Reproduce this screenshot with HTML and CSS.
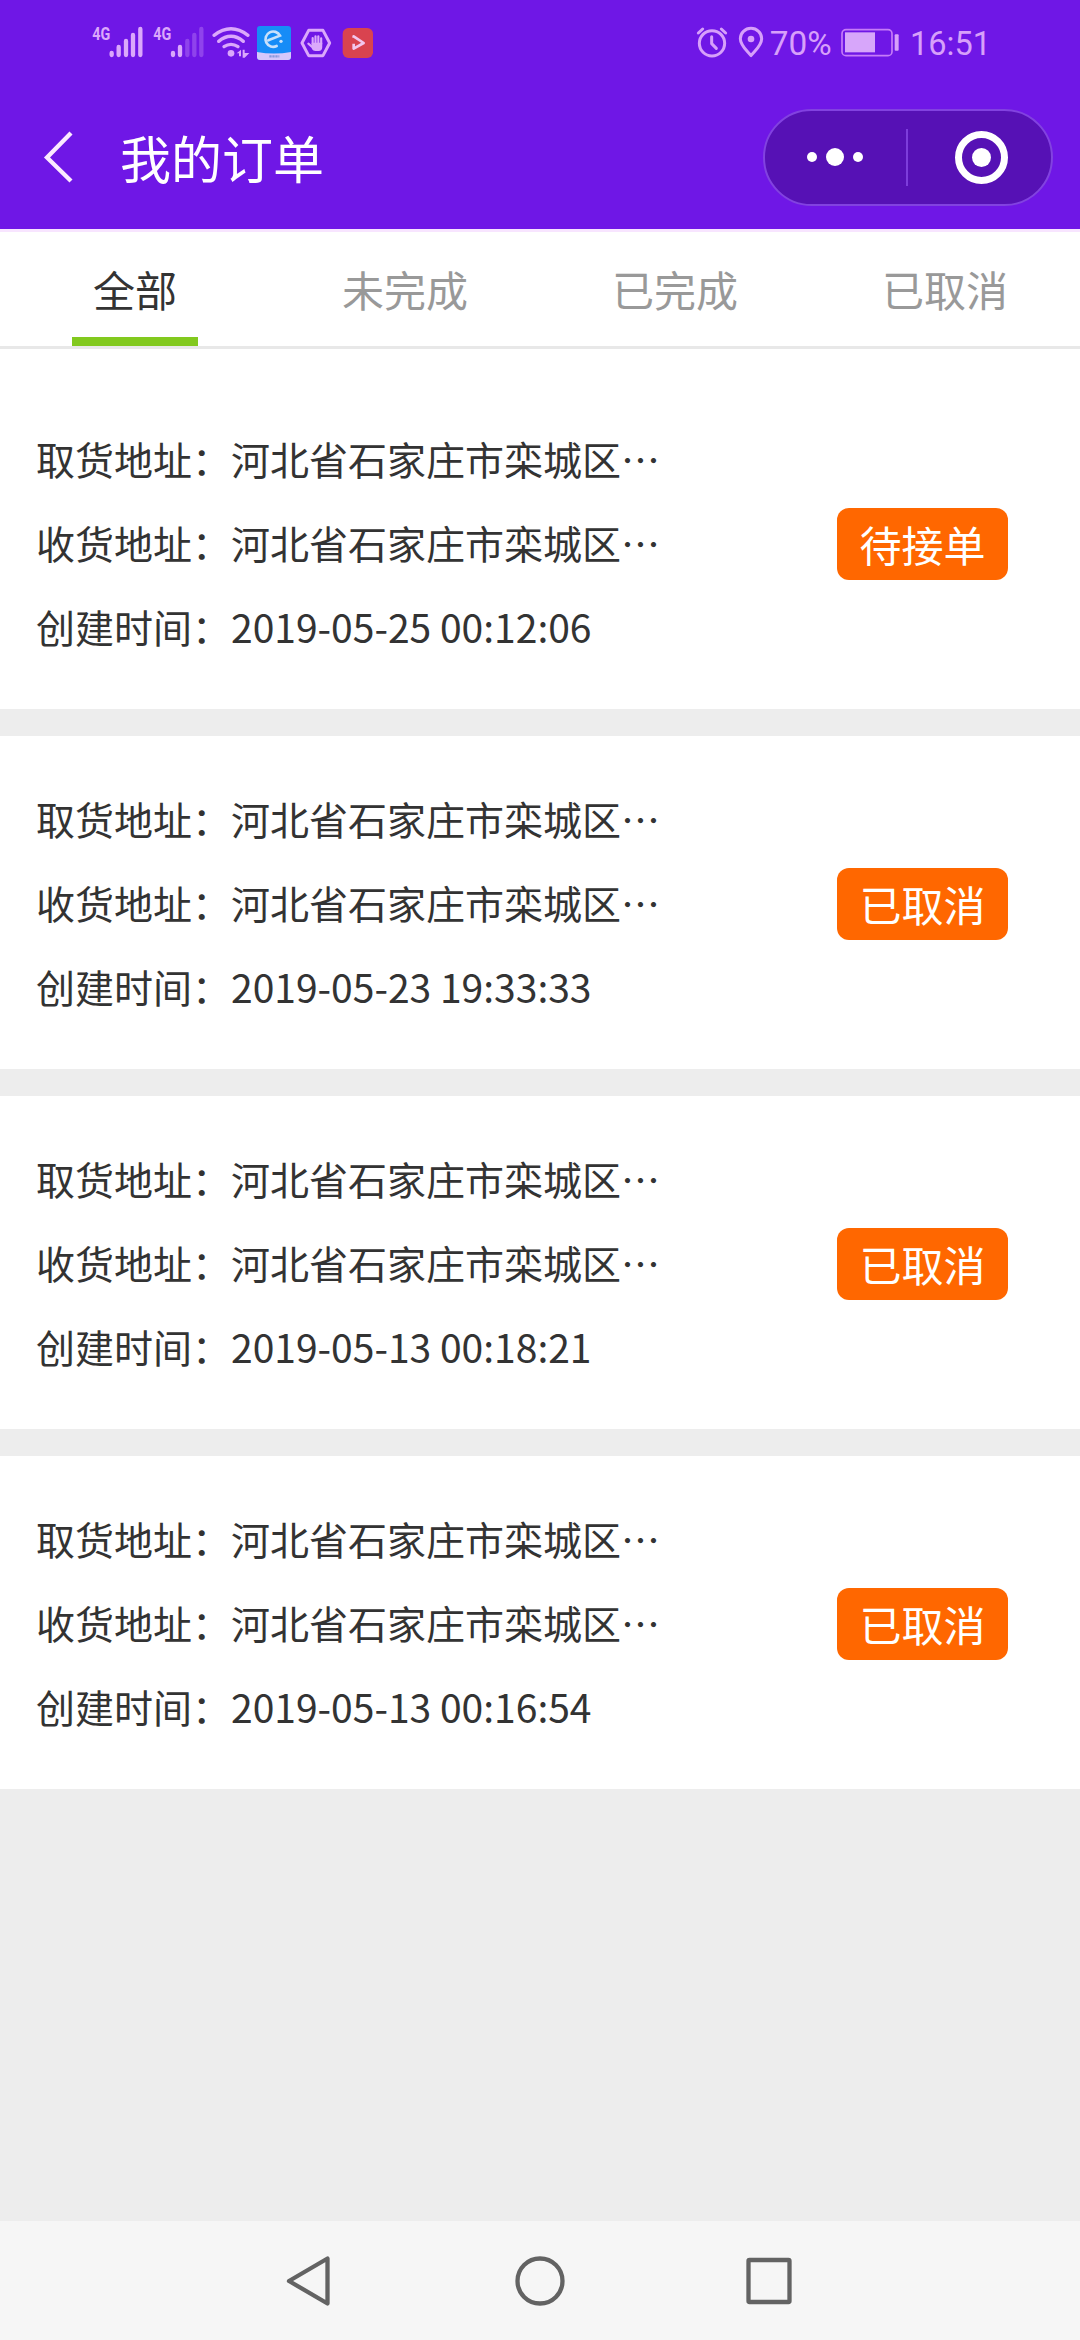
FILE: index.html
```html
<!DOCTYPE html>
<html lang="zh-CN">
<head>
<meta charset="utf-8">
<title>我的订单</title>
<link rel="stylesheet" href="styles.css">
</head>
<body>
<header class="header">
  <div class="status">
    <svg class="status-left" width="310" height="70" viewBox="0 0 930 210" fill="#dba8fb">
      <text class="net" x="37" y="90" textLength="54" lengthAdjust="spacingAndGlyphs">4G</text>
      <g stroke="#dba8fb" stroke-width="13" stroke-linecap="round">
        <path d="M95 129v6M116 111v24M138 93v42M159 75v60M181 57v78"/>
        <path d="M279 129v6M300 111v24"/>
        <path d="M322 93v42M343 75v60M364 57v78" opacity=".3"/>
      </g>
      <text class="net" x="220" y="90" textLength="54" lengthAdjust="spacingAndGlyphs">4G</text>
      <g fill="none" stroke="#dba8fb" stroke-width="10" stroke-linecap="round">
        <path d="M402 76Q453 37 504 76M416 94Q453 64 490 94M432 110Q453 96 474 110"/>
      </g>
      <circle cx="453" cy="130" r="10"/>
      <path d="M470 130l13-11v20h-6v-9zM488 119h6v10h14l-14 14h-6z"/>
      <rect x="531" y="48" width="102" height="102" rx="9" fill="#168cf7"/>
      <path d="M531 126q51 9 102 0v15q0 9-9 9h-84q-9 0-9-9z" fill="#d5c7fb"/>
      <path d="M568 139h30" stroke="#8798dc" stroke-width="7" stroke-dasharray="7 2"/>
      <path d="M565 91L600 77A23 23 0 1 0 590 108" fill="none" stroke="#c8e0fb" stroke-width="8" stroke-linecap="round"/>
      <circle cx="603" cy="94" r="5" fill="#c8e0fb"/>
      <path d="M686 61h43l20 38-20 38h-43l-20-38z" fill="none" stroke="#dba8fb" stroke-width="9" stroke-linejoin="round"/>
      <path d="M698 102V84M706.500 102V79M715 102V79M723.500 102V85M698 112L685 101" stroke="#dba8fb" stroke-width="6.500" stroke-linecap="round"/>
      <path d="M694.700 98h32v13q0 12-11 12h-10q-6 0-10-6z"/>
      <rect x="788" y="54" width="91" height="90" rx="17" fill="#d9434f"/>
      <path d="M821 83V79l30 20-30 17v-15" fill="none" stroke="#f2c6ed" stroke-width="8" stroke-linejoin="round"/>
    </svg>
    <svg class="status-right" width="330" height="70" viewBox="0 0 990 210" fill="#d7a0fa">
      <g fill="none" stroke="#d7a0fa" stroke-width="9" stroke-linecap="round" stroke-linejoin="round">
        <circle cx="96" cy="100" r="38"/>
        <path d="M55 69l13-12M124 57l13 12M95 80v21l14 14"/>
        <path d="M213 137C200 121 181 106 181 86a32 31 0 0 1 64 0C245 106 226 121 213 137z"/>
      </g>
      <circle cx="213" cy="87" r="10"/>
      <text class="clock" x="269" y="135" textLength="186" lengthAdjust="spacingAndGlyphs">70%</text>
      <rect x="486" y="59" width="150" height="78" rx="12" fill="none" stroke="#c67cf8" stroke-width="5"/>
      <rect x="495" y="67" width="90" height="60" fill="#d7a6fa"/>
      <rect x="644" y="73" width="12" height="49" rx="3"/>
      <text class="clock" x="690" y="135" textLength="243" lengthAdjust="spacingAndGlyphs">16:51</text>
    </svg>
  </div>
  <div class="navbar">
    <svg class="back" width="30" height="54" viewBox="0 0 30 54" fill="none" stroke="#fbeaff" stroke-width="4.3"><path d="M28 3L4 27.500 28 51"/></svg>
    <h1 class="title">我的订单</h1>
    <div class="capsule">
      <div class="dots"><i class="dot"></i><i class="dot dot-big"></i><i class="dot"></i></div>
      <div class="divider"></div>
      <div class="close"><div class="ring"><i class="core"></i></div></div>
    </div>
  </div>
</header>
<nav class="tabs">
  <div class="tab active"><span>全部</span></div>
  <div class="tab">未完成</div>
  <div class="tab">已完成</div>
  <div class="tab">已取消</div>
</nav>
<main class="orders">
  <section class="order">
    <div class="info">
      <p>取货地址：河北省石家庄市栾城区…</p>
      <p>收货地址：河北省石家庄市栾城区…</p>
      <p>创建时间：2019-05-25 00:12:06</p>
    </div>
    <div class="badge">待接单</div>
  </section>
  <section class="order">
    <div class="info">
      <p>取货地址：河北省石家庄市栾城区…</p>
      <p>收货地址：河北省石家庄市栾城区…</p>
      <p>创建时间：2019-05-23 19:33:33</p>
    </div>
    <div class="badge">已取消</div>
  </section>
  <section class="order">
    <div class="info">
      <p>取货地址：河北省石家庄市栾城区…</p>
      <p>收货地址：河北省石家庄市栾城区…</p>
      <p>创建时间：2019-05-13 00:18:21</p>
    </div>
    <div class="badge">已取消</div>
  </section>
  <section class="order">
    <div class="info">
      <p>取货地址：河北省石家庄市栾城区…</p>
      <p>收货地址：河北省石家庄市栾城区…</p>
      <p>创建时间：2019-05-13 00:16:54</p>
    </div>
    <div class="badge">已取消</div>
  </section>
</main>
<footer class="system">
  <svg width="50" height="60" viewBox="0 0 50 60"><path d="M43.500 7.500v45L5 30z"/></svg>
  <svg width="60" height="60" viewBox="0 0 60 60"><circle cx="30" cy="30" r="22.500"/></svg>
  <svg width="50" height="60" viewBox="0 0 50 60"><rect x="2.500" y="9" width="41" height="42" rx="1"/></svg>
</footer>
</body>
</html>
```

FILE: styles.css
```css
* { box-sizing: border-box; }
body {
  margin: 0;
  width: 1080px;
  height: 2340px;
  display: flex;
  flex-direction: column;
  background: #ededed;
  color: #333;
  font-family: "Noto Sans CJK SC", sans-serif;
}
svg { display: block; }
h1, p { margin: 0; font-weight: 400; }

.header { height: 229px; background: #6f17e6; flex: none; }
.status {
  height: 86px;
  padding: 10px 70px 0 80px;
  display: flex;
  justify-content: space-between;
}
.net { font: 700 56px Roboto, sans-serif; }
.clock { font: 400 101px Roboto, sans-serif; }
.navbar {
  height: 142px;
  padding: 0 27px 0 43px;
  display: flex;
  align-items: center;
}
.title {
  margin-left: 47px;
  font-size: 51px;
  line-height: 76px;
  color: #fff;
}
.capsule {
  margin-left: auto;
  width: 290px;
  height: 97px;
  border: 2px solid #8242e0;
  border-radius: 49px;
  background: #5611b5;
  display: flex;
  align-items: center;
}
.dots, .close {
  flex: 1;
  display: flex;
  align-items: center;
  justify-content: center;
}
.dots { gap: 9px; padding-right: 1px; }
.close { padding-left: 3px; }
.dot { width: 10px; height: 10px; border-radius: 50%; background: #fff; }
.dot-big { width: 18px; height: 18px; }
.divider { width: 2px; height: 57px; background: #7d3ddb; }
.ring {
  width: 53px;
  height: 53px;
  border: 7px solid #fff;
  border-radius: 50%;
  display: flex;
  align-items: center;
  justify-content: center;
}
.core { width: 19px; height: 19px; border-radius: 50%; background: #fff; }

.tabs {
  height: 120px;
  flex: none;
  display: grid;
  grid-template-columns: repeat(4, 1fr);
  background: #fff;
  border-top: 3px solid #f8e5ff;
  border-bottom: 3px solid #e8e8e8;
}
.tab {
  display: flex;
  justify-content: center;
  font-size: 42px;
  line-height: 114px;
  color: #999;
}
.tab.active { color: #333; }
.active span {
  width: 126px;
  height: 114px;
  text-align: center;
  border-bottom: 9px solid #82c91e;
}

.orders {
  display: flex;
  flex-direction: column;
  gap: 27px;
}
.order {
  height: 333px;
  padding: 0 72px 0 36px;
  display: flex;
  align-items: center;
  justify-content: space-between;
  background: #fff;
}
.order:first-child { height: 360px; padding-top: 27px; }
.info { padding-bottom: 2px; font-size: 39px; line-height: 84px; white-space: nowrap; }
.badge {
  width: 171px;
  height: 72px;
  margin-top: 3px;
  border-radius: 12px;
  background: #ff6700;
  color: #fff;
  font-size: 42px;
  line-height: 72px;
  text-align: center;
}

.system {
  margin-top: auto;
  height: 119px;
  padding: 0 284px;
  display: flex;
  align-items: center;
  justify-content: space-between;
  background: #f6f6f6;
}
.system svg { fill: none; stroke: #636363; stroke-width: 4.300px; stroke-linejoin: round; }
```
